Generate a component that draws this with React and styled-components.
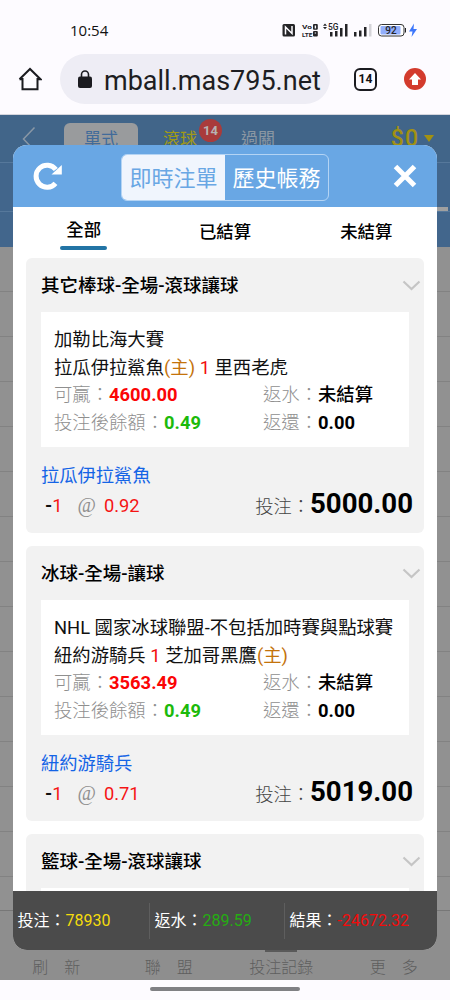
import React from "react";
import styled, { createGlobalStyle } from "styled-components";

const GlobalStyle = createGlobalStyle`
  * { box-sizing: border-box; }
  body {
    margin: 0;
    font-family: Roboto, "Noto Sans CJK TC", sans-serif;
    color: #111;
    background: #fdfbff;
  }
`;

const Screen = styled.div`
  display: flex;
  flex-direction: column;
  width: 450px;
  height: 1000px;
  overflow: hidden;
  background: #fdfbff;
`;

const StatusBar = styled.div`
  display: flex;
  justify-content: space-between;
  align-items: center;
  height: 54px;
  padding: 6px 31px 0 70px;
`;

const Clock = styled.span`
  font-family: "Open Sans", sans-serif;
  font-size: 15px;
  font-weight: 500;
`;

const AddressBar = styled.div`
  display: flex;
  align-items: center;
  height: 61px;
  padding: 0 24px 10px 18px;
  border-bottom: 1px solid #d5d6de;
`;

const UrlPill = styled.div`
  display: flex;
  align-items: center;
  width: 270px;
  height: 50px;
  margin-left: 18px;
  padding-left: 18px;
  border-radius: 25px;
  background: #eeedf5;
`;

const UrlText = styled.span`
  margin-left: 12px;
  padding-top: 4px;
  overflow: hidden;
  white-space: nowrap;
  font-size: 27px;
  line-height: 40px;
  color: #1d1d22;
`;

const TabCount = styled.div`
  display: flex;
  align-items: center;
  justify-content: center;
  width: 23px;
  height: 23px;
  margin-left: 24px;
  border: 2px solid #1b1b20;
  border-radius: 6px;
  font-size: 12px;
  font-weight: 700;
`;

const UpdateButton = styled.div`
  display: flex;
  align-items: center;
  justify-content: center;
  width: 22px;
  height: 22px;
  margin-left: 27px;
  border-radius: 50%;
  background: #d33b2d;
`;

const Page = styled.div`
  position: relative;
  display: flex;
  flex-direction: column;
  height: 865px;
  background: #919191;
`;

const SiteBar = styled.div`
  display: flex;
  height: 48px;
  background: #416589;
  border-bottom: 1px solid #56789b;
  padding-left: 22px;
  font-size: 17px;
  color: #8b97a3;
`;

const SingleTab = styled.div`
  width: 74px;
  height: 40px;
  margin: 8px 0 0 28px;
  border-radius: 6px;
  background: #999b9d;
  color: #416b9a;
  line-height: 32px;
  text-align: center;
`;

const BarTab = styled.div`
  width: ${p => p.$width}px;
  padding-top: 8px;
  margin-left: ${p => p.$gap}px;
  line-height: 32px;
  color: ${p => p.$color};
`;

const Badge = styled.span`
  position: absolute;
  left: 199px;
  top: 4px;
  width: 23px;
  height: 23px;
  border-radius: 50%;
  background: #a93b3b;
  color: #b7b3b3;
  font-size: 13px;
  font-weight: 700;
  line-height: 23px;
  text-align: center;
`;

const Balance = styled.div`
  display: flex;
  align-items: center;
  height: 46px;
  margin-left: auto;
  padding-right: 16px;
  gap: 5px;
  font-size: 23px;
  font-weight: 500;
  letter-spacing: 1px;
  color: #a29111;
`;

const SubBar = styled.div`
  display: flex;
  flex-direction: column;
  align-items: flex-end;
  justify-content: flex-end;
  flex: none;
  height: ${p => p.$height}px;
  background: #42668c;
  border-bottom: ${p => (p.$line ? "1px solid #56789b" : "0")};
`;

const Marker = styled.div`
  width: 14px;
  height: 4px;
  margin-right: 2px;
  background: #a0a0a0;
`;

const Rows = styled.div`
  flex: 1;
  overflow: hidden;
`;

const ListRow = styled.div`
  height: 45px;
  border-bottom: 1px solid #828282;
`;

const BottomTabs = styled.div`
  display: flex;
  height: 70px;
  border-top: 1px solid #777;
  background: #8e8e8e;
`;

const BottomTab = styled.div`
  display: flex;
  flex-direction: column;
  align-items: center;
  width: 112.5px;
  padding-top: 38px;
  color: #5e5e5e;
  font-size: 16px;
  line-height: 28px;
  word-spacing: 12px;
  font-weight: 300;
`;

const Indicator = styled.div`
  width: 32px;
  height: 3px;
  flex: none;
  margin-bottom: 2px;
  background: ${p => (p.$active ? "#5a5a5a" : "transparent")};
`;

const Modal = styled.div`
  position: absolute;
  left: 13px;
  top: 30px;
  display: flex;
  flex-direction: column;
  width: 424px;
  height: 805px;
  border-radius: 14px;
  overflow: hidden;
  background: #fff;
`;

const ModalHeader = styled.div`
  display: flex;
  align-items: center;
  flex: none;
  height: 62px;
  padding: 0 20px;
  background: #69a7e4;
`;

const Toggle = styled.div`
  display: flex;
  width: 208px;
  height: 47px;
  margin: 2px 0 0 58px;
  border: 1px solid #b4d4f4;
  border-radius: 6px;
  overflow: hidden;
`;

const ToggleItem = styled.div`
  flex: 1;
  font-size: 22px;
  line-height: 48px;
  text-align: center;
  color: ${p => (p.$active ? "#69a7e4" : "#fff")};
  background: ${p => (p.$active ? "#f0f5fd" : "transparent")};
`;

const CloseButton = styled.svg`
  margin-left: auto;
`;

const Filters = styled.div`
  display: flex;
  flex: none;
  height: 51px;
`;

const Filter = styled.div`
  display: flex;
  flex-direction: column;
  align-items: center;
  flex: 1;
  padding-top: ${p => (p.$active ? 10 : 12)}px;
  font-size: 17.4px;
  font-weight: 500;
  line-height: 27px;
  color: #000;
`;

const Underline = styled.div`
  width: 47px;
  height: 4px;
  margin-top: 2px;
  border-radius: 2px;
  background: #2274a5;
`;

const BetList = styled.div`
  display: flex;
  flex-direction: column;
  flex: 1;
  gap: 13px;
  padding: 0 13px;
  overflow: hidden;
`;

const Card = styled.div`
  flex: none;
  height: 275px;
  padding: 0 15px;
  border-radius: 6px;
  background: #f2f2f2;
`;

const CardTitle = styled.div`
  display: flex;
  align-items: center;
  justify-content: space-between;
  height: 54px;
  margin-right: -13px;
  padding-top: 2px;
  font-size: 18.5px;
  font-weight: 500;
  line-height: 52px;
  color: #000;
`;

const Detail = styled.div`
  height: 135px;
  padding: 14px 13px 0;
  background: #fff;
  font-size: 18.35px;
  line-height: 27.7px;
  white-space: nowrap;
`;

const Columns = styled.div`
  display: grid;
  grid-template-columns: 209px 1fr;
`;

const Label = styled.span`
  font-weight: 300;
  color: ${p => p.$color || "#8f8f8f"};
`;

const Value = styled.span`
  font-weight: ${p => p.$weight || 700};
  color: ${p => p.$color || "#000"};
`;

const Tint = styled.span`
  color: ${p => p.$color};
`;

const Pick = styled.div`
  margin-top: 15px;
  font-size: 18.3px;
  line-height: 28px;
  color: #1464e6;
`;

const Stake = styled.div`
  display: flex;
  justify-content: space-between;
  align-items: baseline;
  margin: -1px -4px 0 0;
  padding-left: 4px;
  font-size: 18.3px;
  line-height: 30px;
`;

const Odds = styled.div`
  transform: translateY(-1px);
`;

const At = styled.span`
  margin: 0 8px 0 15px;
  font-family: "Liberation Serif", serif;
  font-size: 20px;
  line-height: 1;
  color: #8f8f8f;
`;

const Amount = styled.b`
  font-size: 27.6px;
  color: #000;
`;

const Summary = styled.div`
  display: flex;
  align-items: center;
  flex: none;
  height: 59px;
  background: #4b4b4b;
`;

const Total = styled.div`
  width: ${p => p.$width}px;
  height: 36px;
  padding-left: 4.5px;
  border-right: ${p => (p.$last ? "0" : "1px solid #5e5e5e")};
  font-size: 16px;
  line-height: 35px;
  white-space: nowrap;
  color: #fff;
`;

const GestureBar = styled.div`
  width: 150px;
  height: 4px;
  margin: 7px auto;
  border-radius: 2px;
  background: #808084;
`;

const bets = [
  {
    title: "其它棒球-全場-滾球讓球",
    league: "加勒比海大賽",
    home: "拉瓜伊拉鯊魚",
    away: "里西老虎",
    homeFirst: true,
    win: "4600.00",
    pick: "拉瓜伊拉鯊魚",
    odds: "0.92",
    amount: "5000.00"
  },
  {
    title: "冰球-全場-讓球",
    league: "NHL 國家冰球聯盟-不包括加時賽與點球賽",
    home: "紐約游騎兵",
    away: "芝加哥黑鷹",
    homeFirst: false,
    win: "3563.49",
    pick: "紐約游騎兵",
    odds: "0.71",
    amount: "5019.00"
  }
];

function StatusIcons() {
  return (
    <svg width="138" height="20" viewBox="282 20 138 20" fontFamily="Roboto" fontWeight="700" fill="#242427">
      <rect x="283.500" y="24" width="12.500" height="12.500" rx="1.500" />
      <path d="M286.500 34.500V27L293 33.500V26" fill="none" stroke="#fdfbff" strokeWidth="1.500" />
      <text x="303" y="29" fontSize="6.200" textLength="10" lengthAdjust="spacingAndGlyphs">Vo</text>
      <text x="303" y="36.600" fontSize="6.200" textLength="10.500" lengthAdjust="spacingAndGlyphs">LTE</text>
      <rect x="314" y="24" width="4.800" height="5.800" rx="1" />
      <rect x="314" y="31" width="4.800" height="5.600" rx="1" />
      <path d="M315.700 25.500h1.400v3h-1.400zM315.700 32.500h1.400v1h-1.400z" fill="#fdfbff" />
      <path d="M324 25.700l2-2.200 2 2.200zM324 27l2 2.200 2-2.200z" />
      <text x="329" y="29.500" fontSize="8.500" fontWeight="500" textLength="10.500" lengthAdjust="spacingAndGlyphs">5G</text>
      <path d="M331 32h2.500V36.500H331zM336 31h2.500V36.500H336zM341 28h2.500V36.500H341zM346 24h2.500V36.500H346z" />
      <path d="M355 32h2.500V36.500H355zM360 30.500h2.500V36.500H360zM365 27h2.500V36.500H365z" />
      <path d="M370 24h2.500V36.500H370z" fill="#d5d4d9" />
      <rect x="379.500" y="24.500" width="25.500" height="11.500" rx="3" fill="#fff" stroke="#333" />
      <rect x="381.500" y="26" width="20" height="8.500" rx="1" fill="#92aefb" />
      <path d="M406 28h1v4.500h-1z" />
      <text x="392" y="33.800" fontSize="10" fontWeight="500" textAnchor="middle">92</text>
      <path d="M415 23.500l-5 8h3.500l-1 5.500 5.500-8h-3.500z" fill="#3d77fb" />
    </svg>
  );
}

function Chevron() {
  return (
    <svg width="20" height="12" viewBox="0 0 20 12" fill="none" stroke="#c5c5c5" strokeWidth="2.200">
      <path d="M1.500 1.500L9.500 9L17.500 1.500" />
    </svg>
  );
}

function BetCard({ bet }) {
  const host = <Tint $color="#c4730b">(主)</Tint>;
  return (
    <Card>
      <CardTitle>
        {bet.title}
        <Chevron />
      </CardTitle>
      <Detail>
        <div>{bet.league}</div>
        <div>
          {bet.home}
          {bet.homeFirst && host} <Tint $color="#f20d0d">1</Tint> {bet.away}
          {!bet.homeFirst && host}
        </div>
        <Columns>
          <div>
            <Label>可贏：</Label>
            <Value $color="#fb0505">{bet.win}</Value>
          </div>
          <div>
            <Label>返水：</Label>
            <Value $weight={500}>未結算</Value>
          </div>
          <div>
            <Label>投注後餘額：</Label>
            <Value $color="#1cba0b">0.49</Value>
          </div>
          <div>
            <Label>返還：</Label>
            <Value>0.00</Value>
          </div>
        </Columns>
      </Detail>
      <Pick>{bet.pick}</Pick>
      <Stake>
        <Odds>
          <b>-</b>
          <Tint $color="#f51414">1</Tint>
          <At>@</At>
          <Tint $color="#f51414">{bet.odds}</Tint>
        </Odds>
        <div>
          <Label $color="#444">投注：</Label>
          <Amount>{bet.amount}</Amount>
        </div>
      </Stake>
    </Card>
  );
}

function BetDialog() {
  return (
    <Modal>
      <ModalHeader>
        <svg width="30" height="30" viewBox="0 0 30 30" fill="none" stroke="#fff" strokeWidth="5">
          <path d="M22.500 22.300A11 11 0 1 1 22.800 8.500" />
          <path d="M28.800 4v9.500H18.500z" fill="#fff" stroke="none" />
        </svg>
        <Toggle>
          <ToggleItem $active>即時注單</ToggleItem>
          <ToggleItem>歷史帳務</ToggleItem>
        </Toggle>
        <CloseButton width="24" height="24" viewBox="0 0 24 24" stroke="#fff" strokeWidth="5">
          <path d="M2.500 2.500L21.500 21.500M21.500 2.500L2.500 21.500" />
        </CloseButton>
      </ModalHeader>
      <Filters>
        <Filter $active>
          全部
          <Underline />
        </Filter>
        <Filter>已結算</Filter>
        <Filter>未結算</Filter>
      </Filters>
      <BetList>
        {bets.map(bet => (
          <BetCard key={bet.title} bet={bet} />
        ))}
        <Card>
          <CardTitle>
            籃球-全場-滾球讓球
            <Chevron />
          </CardTitle>
          <Detail />
        </Card>
      </BetList>
      <Summary>
        <Total $width={137}>
          投注：<Tint $color="#f5dc0c">78930</Tint>
        </Total>
        <Total $width={135}>
          返水：<Tint $color="#25ad12">289.59</Tint>
        </Total>
        <Total $width={150} $last>
          結果：<Tint $color="#f20b0b">-24672.32</Tint>
        </Total>
      </Summary>
    </Modal>
  );
}

export default function App() {
  return (
    <Screen>
      <GlobalStyle />
      <StatusBar>
        <Clock>10:54</Clock>
        <StatusIcons />
      </StatusBar>
      <AddressBar>
        <svg width="24" height="24" viewBox="0 0 24 24" fill="none" stroke="#1b1b20" strokeWidth="2">
          <path d="M4.500 11v11.200h15V11M1.500 12.200L12 2l10.500 10.200H19.500M1.500 12.200H4.500" />
        </svg>
        <UrlPill>
          <svg width="14" height="18" viewBox="0 0 14 18">
            <rect y="6.500" width="14" height="11.500" rx="2" fill="#1b1b20" />
            <path d="M3.500 7V4.500a3.500 3.500 0 0 1 7 0V7" fill="none" stroke="#1b1b20" strokeWidth="1.600" />
          </svg>
          <UrlText>mball.mas795.net</UrlText>
        </UrlPill>
        <TabCount>14</TabCount>
        <UpdateButton>
          <svg width="14" height="12" viewBox="0 0 14 12" fill="#fff">
            <path d="M7 0l6 6.500H10V12H4V6.500H1z" />
          </svg>
        </UpdateButton>
      </AddressBar>
      <Page>
        <SiteBar>
          <svg width="14" height="36" viewBox="0 0 14 36" fill="none" stroke="#8997a5" strokeWidth="1.500">
            <path d="M12.500 12.500L1.500 24L12.500 35.500" />
          </svg>
          <SingleTab>單式</SingleTab>
          <BarTab $width={40} $gap={25} $color="#a19a16">滾球</BarTab>
          <BarTab $width={40} $gap={38} $color="#8b97a3">過關</BarTab>
          <Balance>
            $0
            <svg width="10" height="7" viewBox="0 0 10 7" fill="#a29111">
              <path d="M0 0h10L5 7z" />
            </svg>
          </Balance>
          <Badge>14</Badge>
        </SiteBar>
        <SubBar $height={49} $line>
          <Marker />
        </SubBar>
        <SubBar $height={35} />
        <Rows>
          {Array.from({ length: 15 }, (_, i) => (
            <ListRow key={i} />
          ))}
        </Rows>
        <BottomTabs>
          {["刷 新", "聯 盟", "投注記錄", "更 多"].map(name => (
            <BottomTab key={name}>
              <Indicator $active={name === "投注記錄"} />
              {name}
            </BottomTab>
          ))}
        </BottomTabs>
        <BetDialog />
      </Page>
      <GestureBar />
    </Screen>
  );
}
